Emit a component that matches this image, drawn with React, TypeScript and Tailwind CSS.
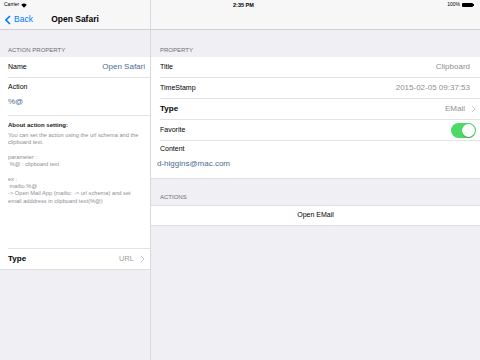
import React from "react";

const Chevron = () => (
  <svg width="5" height="8" viewBox="0 0 5 8" className="ml-[6px]">
    <path d="M1 1 L4 4 L1 7" fill="none" stroke="#c7c7cc" strokeWidth="1" />
  </svg>
);

export default function App() {
  const font = { fontFamily: '"Liberation Sans", Arial, sans-serif' };
  return (
    <div className="w-[480px] h-[360px] flex flex-col bg-[#efeff4] text-black overflow-hidden" style={font}>
      {/* status + nav */}
      <div className="h-[30px] flex bg-[#f7f7f8] border-b border-[#d0d0d4] shrink-0">
        <div className="w-[151px] border-r border-[#d8d8dc] flex flex-col">
          <div className="h-[10px] flex items-center pl-[4px] text-[5px] text-black">
            Carrier
            <svg width="6" height="5" viewBox="0 0 12 9" className="ml-[2px]">
              <path d="M6 9 L0.5 3 A8 8 0 0 1 11.5 3 Z" fill="#000" />
            </svg>
          </div>
          <div className="flex-1 flex items-center relative">
            <div className="flex items-center pl-[5px] text-[#007aff] text-[8.5px]">
              <svg width="6" height="10" viewBox="0 0 6 10" className="mr-[3px]">
                <path d="M5 1 L1 5 L5 9" fill="none" stroke="#007aff" strokeWidth="1.6" />
              </svg>
              Back
            </div>
            <div className="absolute left-0 right-0 text-center text-[8.5px] font-semibold">Open Safari</div>
          </div>
        </div>
        <div className="flex-1 flex flex-col">
          <div className="h-[10px] flex items-center justify-end pr-[6px] text-[5px] relative">
            <span className="absolute left-[82px] font-semibold text-[5.5px]">2:35 PM</span>
            100%
            <div className="ml-[2px] w-[11px] h-[4px] bg-black rounded-[1px]" />
            <div className="w-[1px] h-[2px] bg-black" />
          </div>
        </div>
      </div>

      <div className="flex flex-1">
        {/* left pane */}
        <div className="w-[151px] border-r border-[#d8d8dc] flex flex-col">
          <div className="h-[27px] flex items-end pb-[2px] pl-[8px] text-[6px] text-[#6d6d72]">ACTION PROPERTY</div>
          <div className="bg-white border-b border-[#e0e0e4]">
            <div className="h-[20px] flex items-center justify-between pl-[8px] pr-[5px] text-[7px]">
              <span>Name</span>
              <span className="text-[#4a6c92] text-[8px]">Open Safari</span>
            </div>
            <div className="ml-[8px] h-px bg-[#e3e3e7]" />
            <div className="h-[37px] flex flex-col pl-[8px] pt-[4px] text-[7px]">
              <span>Action</span>
              <span className="text-[#4a6c92] text-[8px] mt-[3px]">%@</span>
            </div>
            <div className="ml-[8px] h-px bg-[#e3e3e7]" />
            <div className="h-[132px] pl-[8px] pr-[2px] pt-[5px]">
              <div className="text-[6px] font-semibold text-[#222]">About action setting:</div>
              <div className="text-[5.7px] leading-[7.3px] text-[#8e8e93] mt-[2px] whitespace-nowrap">
                <div>You can set the action using the url schema and the</div>
                <div>clipboard text.</div>
                <div className="h-[7.3px]" />
                <div>parameter :</div>
                <div>&nbsp;%@ : clipboard text</div>
                <div className="h-[7.3px]" />
                <div>ex :</div>
                <div>&nbsp;mailto:%@</div>
                <div>-&gt; Open Mail App (mailto: -&gt; url schema) and set</div>
                <div>email adddress in clipboard text(%@)</div>
              </div>
            </div>
            <div className="ml-[8px] h-px bg-[#e3e3e7]" />
            <div className="h-[20px] flex items-center justify-between pl-[8px] pr-[5px]">
              <span className="text-[8px] font-semibold">Type</span>
              <span className="flex items-center text-[#a0a0a5] text-[7.5px]">URL<Chevron /></span>
            </div>
          </div>
        </div>

        {/* right pane */}
        <div className="flex-1 flex flex-col">
          <div className="h-[27px] flex items-end pb-[2px] pl-[9px] text-[6px] text-[#6d6d72]">PROPERTY</div>
          <div className="bg-white border-b border-[#e0e0e4]">
            <div className="h-[20px] flex items-center justify-between pl-[9px] pr-[10px] text-[7px]">
              <span>Title</span>
              <span className="text-[#8e8e93] text-[8px]">Clipboard</span>
            </div>
            <div className="ml-[9px] h-px bg-[#e3e3e7]" />
            <div className="h-[20px] flex items-center justify-between pl-[9px] pr-[10px] text-[7px]">
              <span>TimeStamp</span>
              <span className="text-[#8e8e93] text-[8px]">2015-02-05 09:37:53</span>
            </div>
            <div className="ml-[9px] h-px bg-[#e3e3e7]" />
            <div className="h-[20px] flex items-center justify-between pl-[9px] pr-[4px]">
              <span className="text-[8px] font-semibold">Type</span>
              <span className="flex items-center text-[#8e8e93] text-[8px]">EMail<Chevron /></span>
            </div>
            <div className="ml-[9px] h-px bg-[#e3e3e7]" />
            <div className="h-[20px] flex items-center justify-between pl-[9px] pr-[4px] text-[7px]">
              <span>Favorite</span>
              <div className="w-[25px] h-[15px] rounded-full bg-[#4cd964] relative">
                <div className="absolute right-[1px] top-[1px] w-[13px] h-[13px] rounded-full bg-white shadow-[0_1px_1px_rgba(0,0,0,0.25)]" />
              </div>
            </div>
            <div className="ml-[9px] h-px bg-[#e3e3e7]" />
            <div className="h-[37px] flex flex-col pl-[6px] pt-[3px]">
              <span className="text-[7px] pl-[3px]">Content</span>
              <span className="text-[#4a6c92] text-[8px] mt-[3px]">d-higgins@mac.com</span>
            </div>
          </div>
          <div className="h-[26px] flex items-end pb-[3px] pl-[9px] text-[6px] text-[#6d6d72]">ACTIONS</div>
          <div className="bg-white border-y border-[#e0e0e4] h-[21px] flex items-center justify-center text-[7px]">
            Open EMail
          </div>
        </div>
      </div>
    </div>
  );
}
